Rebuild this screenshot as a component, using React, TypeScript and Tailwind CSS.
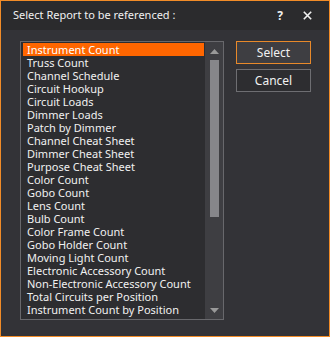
import React from "react";

const items = [
  "Instrument Count",
  "Truss Count",
  "Channel Schedule",
  "Circuit Hookup",
  "Circuit Loads",
  "Dimmer Loads",
  "Patch by Dimmer",
  "Channel Cheat Sheet",
  "Dimmer Cheat Sheet",
  "Purpose Cheat Sheet",
  "Color Count",
  "Gobo Count",
  "Lens Count",
  "Bulb Count",
  "Color Frame Count",
  "Gobo Holder Count",
  "Moving Light Count",
  "Electronic Accessory Count",
  "Non-Electronic Accessory Count",
  "Total Circuits per Position",
  "Instrument Count by Position",
];

export default function App() {
  return (
    <div
      className="w-[330px] h-[337px] border border-[#f28c28] bg-[#333337] flex flex-col text-[#f1f1f1] overflow-hidden"
      style={{ fontFamily: '"Noto Sans", "Open Sans", sans-serif' }}
    >
      <div className="h-[29px] bg-[#2b2b2d] flex items-center pl-[12px] pr-[17px] text-[11px] shrink-0">
        <span className="flex-1">Select Report to be referenced :</span>
        <span className="mr-[20px] font-bold text-[12px] leading-none">?</span>
        <svg width="9" height="9" viewBox="0 0 9 9">
          <path d="M0.8 0.8 L8.2 8.2 M8.2 0.8 L0.8 8.2" stroke="#f1f1f1" strokeWidth="1.6" />
        </svg>
      </div>
      <div className="flex pl-[19px] pt-[11px] gap-[12px]">
        <div className="w-[204px] h-[279px] border border-[#68686c] bg-[#2d2d30] flex">
          <div className="flex-1 pl-[2px] pt-[1px] pr-[1px]">
            {items.map((t, i) => (
              <div
                key={t}
                className={
                  "h-[13px] leading-[13px] text-[11px] pl-[4px] whitespace-nowrap " +
                  (i === 0 ? "bg-[#ff6600] text-white" : "text-[#f1f1f1]")
                }
              >
                {t}
              </div>
            ))}
          </div>
          <div className="w-[18px] bg-[#3e3e42] flex flex-col items-center">
            <svg width="9" height="6" viewBox="0 0 9 6" className="mt-[7px]">
              <path d="M4.5 0 L9 5 L0 5 Z" fill="#999999" />
            </svg>
            <div className="w-[9px] h-[157px] bg-[#86868a] mt-[5px]" />
            <div className="flex-1" />
            <svg width="9" height="6" viewBox="0 0 9 6" className="mb-[5px]">
              <path d="M0 0 L9 0 L4.5 5 Z" fill="#999999" />
            </svg>
          </div>
        </div>
        <div className="flex flex-col gap-[5px] w-[75px]">
          <div className="h-[23px] border border-[#e8892a] bg-[#3e3e42] flex items-center justify-center text-[12px]">
            Select
          </div>
          <div className="h-[23px] border border-[#6e6e72] bg-[#2d2d30] flex items-center justify-center text-[12px]">
            Cancel
          </div>
        </div>
      </div>
    </div>
  );
}
